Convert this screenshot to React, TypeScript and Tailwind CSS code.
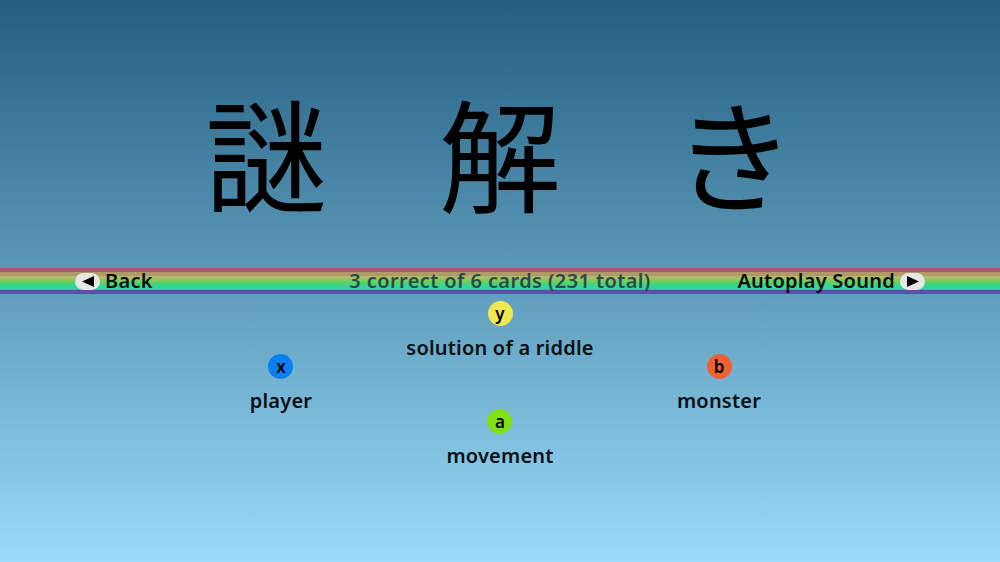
const bands = ["h-[4px] bg-[#a85a68]", "h-[4px] bg-[#b09a68]", "h-[3px] bg-[#b0bc66]", "h-[3px] bg-[#7ccc60]", "h-[3px] bg-[#4ed468]", "h-[4px] bg-[#2ed8a0]", "h-[1px] bg-[#38b8c0]", "h-[4px] bg-[#5c4fa8]"];

function Option({ letter, label, color }: { letter: string; label: string; color: string }) {
  return (
    <div className="flex flex-col items-center">
      <div className={`w-[25px] h-[25px] rounded-full flex items-center justify-center text-[17px] leading-none font-semibold text-black ${color}`}>{letter}</div>
      <div className="mt-[9px] text-[20px] leading-[26px] font-semibold text-[#0a0f14] whitespace-nowrap tracking-[0.2px]">{label}</div>
    </div>
  );
}

export default function App() {
  return (
    <div className="w-[1000px] h-[562px] overflow-hidden flex flex-col bg-gradient-to-b from-[#225f80] to-[#9bdcfa] font-['Noto_Sans','Noto_Sans_CJK_JP',sans-serif]">
      <div className="h-[268px] grid grid-cols-[234px_234px_234px] justify-center items-center pt-[31px] text-[122px] leading-none text-black font-['Noto_Sans_CJK_JP',sans-serif] font-normal text-center">
        <span>謎</span>
        <span>解</span>
        <span>き</span>
      </div>
      <div className="relative h-[26px]">
        <div className="flex flex-col h-full">
          {bands.map((b) => (
            <div key={b} className={b} />
          ))}
        </div>
        <div className="absolute inset-0 grid grid-cols-[1fr_auto_1fr] items-center px-[75px] text-[20px] leading-[26px] font-semibold text-[#0a0f14] tracking-[0.25px]">
          <div className="flex items-center gap-[5px]">
            <div className="w-[25px] h-[17px] rounded-full bg-[#e6e6e6] flex items-center justify-center">
              <svg width="14" height="13" viewBox="0 0 14 13"><path d="M1 6.5 L13 1 V12 Z" fill="#000" /></svg>
            </div>
            <span>Back</span>
          </div>
          <span className="text-[#2b4a4e] tracking-[0.4px]">3 correct of 6 cards (231 total)</span>
          <div className="flex items-center justify-end gap-[5px]">
            <span>Autoplay Sound</span>
            <div className="w-[25px] h-[17px] rounded-full bg-[#e6e6e6] flex items-center justify-center">
              <svg width="14" height="13" viewBox="0 0 14 13"><path d="M13 6.5 L1 1 V12 Z" fill="#000" /></svg>
            </div>
          </div>
        </div>
      </div>
      <div className="grid grid-cols-[219px_219px_219px] justify-center pt-[7px]">
        <div className="flex justify-center pt-[53px]"><Option letter="x" label="player" color="bg-[#0a7ff0]" /></div>
        <div className="flex flex-col items-center gap-[48px]">
          <Option letter="y" label="solution of a riddle" color="bg-[#f0e850]" />
          <Option letter="a" label="movement" color="bg-[#80e010]" />
        </div>
        <div className="flex justify-center pt-[53px]"><Option letter="b" label="monster" color="bg-[#f06030]" /></div>
      </div>
    </div>
  );
}
